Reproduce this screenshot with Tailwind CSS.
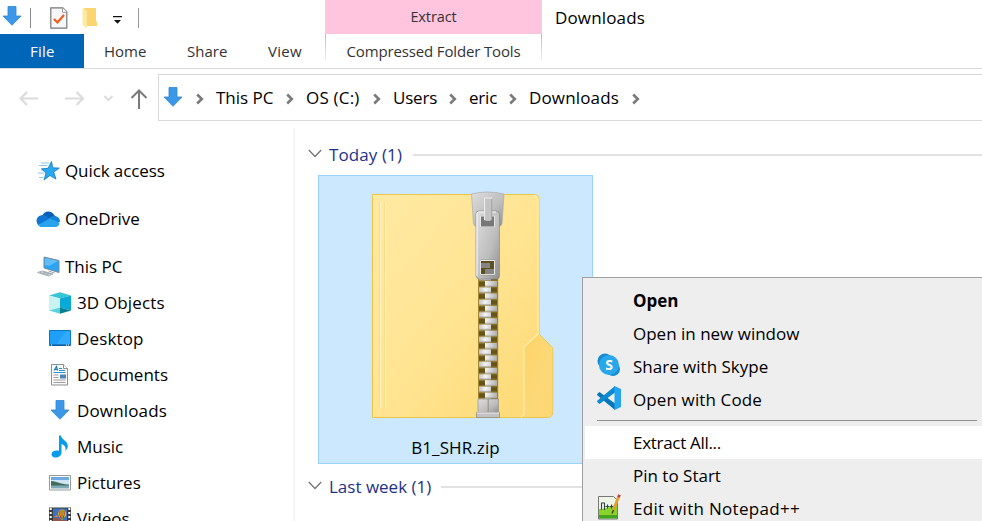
<!DOCTYPE html>
<html lang="en">
<head>
<meta charset="utf-8">
<title>Downloads</title>
<script src="https://cdn.jsdelivr.net/npm/@tailwindcss/browser@4"></script>
</head>
<body class="relative w-[982px] h-[521px] overflow-hidden bg-white text-black text-[17px] leading-6 font-['Open_Sans','Noto_Sans',sans-serif] whitespace-nowrap">
<svg class="hidden">
  <defs>
    <symbol id="arrow" viewBox="0 0 20 20"><path d="M6 .5h8v9.500h5L10 19.300 1 10h5z" fill="#3b98e8" stroke="#2f86d2" stroke-width=".8"/></symbol>
    <symbol id="crumb" viewBox="0 0 8 12"><path d="M1.200 1.500 5.800 6 1.200 10.500" fill="none" stroke="#7a7a7a" stroke-width="2.600"/></symbol>
    <symbol id="chev" viewBox="0 0 14 9"><path d="M.8 1 7 7.500 13.200 1" fill="none" stroke="#757575" stroke-width="1.300"/></symbol>
  </defs>
</svg>

<header class="flex h-[69px] border-b border-[#dadbdc]">
  <div class="w-[325px]">
    <div class="flex h-[34px] items-center">
      <svg class="ml-[2px] w-5 h-5 mb-0.5"><use href="#arrow"/></svg>
      <div class="ml-2 mt-0.5 w-px h-5 bg-[#8a8a8a]"></div>
      <svg class="ml-[19px] mt-0.5 w-[18px] h-[22px]" viewBox="0 0 18 22"><path d="M.8.8h12l4 4v16.400H.8z" fill="#f5f7f9" stroke="#777" stroke-width="1.200"/><path d="M12.500.8v4.500H17" fill="#fff" stroke="#999"/><path d="m4 12 3.500 3.500L14 8" fill="none" stroke="#f4591a" stroke-width="2.200"/></svg>
      <svg class="ml-[14px] mt-0.5 w-[16px] h-[22px]" viewBox="0 0 16 22"><path d="M2 1h12v13.500h1V19H4z" fill="#fbd670"/><path d="M.5 1 5 4v17.500L.5 18z" fill="#ffe9a2"/></svg>
      <svg class="ml-[15px] mt-1.5 w-[9px] h-[9px]" viewBox="0 0 9 9"><path d="M0 0h9v1.300H0zM1 4h7L4.500 7.800z" fill="#111"/></svg>
      <div class="ml-[16px] mt-0.5 w-px h-5 bg-[#999]"></div>
    </div>
    <nav class="flex h-[34px] text-[15px] text-[#333] leading-[34px]">
      <div class="w-[84px] bg-[#0067b8] text-white pl-[30px] tracking-[0.2px]">File</div>
      <div class="w-[83px] pl-5">Home</div>
      <div class="w-[81px] pl-5">Share</div>
      <div class="pl-5 tracking-[0.3px]">View</div>
    </nav>
  </div>
  <div class="w-[217px] text-center text-[15px] text-[#333]">
    <div class="h-[34px] bg-[#ffc5de] leading-[33px] text-[14.500px] tracking-[-0.1px]">Extract</div>
    <div class="flex h-[34px]">
      <div class="w-px h-[26px] bg-linear-to-b from-[#bbb] to-[#eee]"></div>
      <div class="flex-1 leading-[34px] tracking-[-0.15px]">Compressed Folder Tools</div>
      <div class="w-px h-[26px] bg-linear-to-b from-[#bbb] to-[#eee]"></div>
    </div>
  </div>
  <div class="ml-[13px] leading-[35px] tracking-[0.15px]">Downloads</div>
</header>

<div class="flex h-[58px]">
  <svg class="w-[158px] h-[53px]" viewBox="0 69 158 53" fill="none" stroke-width="2.200"><path d="M38 98.500H20M27 92l-6.500 6.500L27 105M65 98.500h18M76.500 92l6.500 6.500-6.500 6.500" stroke="#dcdcdc"/><path d="m104.500 96 4 4 4-4" stroke="#dcdcdc" stroke-width="2"/><path d="M139 109V91.500M131.500 98l7.500-7.500 7.500 7.500" stroke="#7a7a7a" stroke-width="2"/></svg>
  <div class="mt-[5px] h-[47px] flex-1 flex items-center border border-r-0 border-[#d9d9d9] pl-1">
    <svg class="w-5 h-5 mb-0.5"><use href="#arrow"/></svg>
    <svg class="ml-[13px] mr-[12px] mt-0.5 w-2 h-3"><use href="#crumb"/></svg>
    <div class="w-[90px] flex items-center justify-between pr-[12px]"><span>This PC</span><svg class="mt-0.5 w-2 h-3"><use href="#crumb"/></svg></div>
    <div class="w-[87px] flex items-center justify-between pr-[12px]"><span class="tracking-[0.2px]">OS (C:)</span><svg class="mt-0.5 w-2 h-3"><use href="#crumb"/></svg></div>
    <div class="w-[76px] flex items-center justify-between pr-[12px]"><span class="tracking-[-0.2px]">Users</span><svg class="mt-0.5 w-2 h-3"><use href="#crumb"/></svg></div>
    <div class="w-[60px] flex items-center justify-between pr-[12px]"><span class="tracking-[-0.2px]">eric</span><svg class="mt-0.5 w-2 h-3"><use href="#crumb"/></svg></div>
    <div class="w-[123px] flex items-center justify-between pr-[12px]"><span class="tracking-[0.15px]">Downloads</span><svg class="mt-0.5 w-2 h-3"><use href="#crumb"/></svg></div>
  </div>
</div>

<main class="flex h-[394px] overflow-hidden">
  <aside class="w-[293px] shrink-0 flex flex-col pt-[26px] [&>div]:shrink-0">
    <div class="h-9 flex items-center pl-9 mb-3"><svg class="w-6 h-6 mr-[5px]" viewBox="0 0 24 24"><path d="M5 4h8M3 6.500h8M5 11h4M2 14h6M3 18.500h4" stroke="#8bc6ee"/><path d="m15.500 2.500 1.300 6.300 6.500.3-5.600 4 2.300 7-6-3.600-6 4.500 2-7-4.500-4.200 6.500-.5z" fill="#27a8f0" stroke="#1679be" stroke-width=".8"/></svg><span class="tracking-[-0.1px]">Quick access</span></div>
    <div class="h-9 flex items-center pl-9 mb-3"><svg class="w-6 h-6 mr-[5px]" viewBox="0 0 24 24"><path d="M6 9c2-5 9-7 13 0l-6 5z" fill="#0a60b8"/><path d="M5.500 8.200c2-.4 4 .2 5.500 1.300l6 5L2 18c-3.500-5 0-9.500 3.500-9.800z" fill="#0e76d2"/><path d="M16 9.500c4-1.500 8 1 8 5l-4 2-8-5z" fill="#1484d8"/><path d="m2 18 12-6.500 9.500 4.300C23.500 18.500 22 20 19 20H6c-1.800 0-3-.6-4-2z" fill="#29a4ec"/></svg>OneDrive</div>
    <div class="h-9 flex items-center pl-9"><svg class="w-6 h-6 mr-[5px]" viewBox="0 0 24 24"><path d="m8 2 15 3.500v12L8 13z" fill="#2ca4f5" stroke="#7d8c98"/><path d="m9 3 13 3-9 5-4-1z" fill="#63bcf8"/><path d="m1.500 17.500 5-1.500L17 19l-4.500 2z" fill="#e3e7ea" stroke="#a7b0b8"/><path d="m4 17.500 9 2.500M7 17l8 2M12.500 16l6 2" stroke="#9ba7b0"/></svg>This PC</div>
    <div class="h-9 flex items-center pl-12"><svg class="w-6 h-6 mr-[5px]" viewBox="0 0 24 24"><path d="m1 4.500 11-3.300 11 3.300-11 3z" fill="#36c5d4"/><path d="m1 4.500 11 3v9L1 19.500z" fill="#c9f2f2"/><path d="m12 7.500 11-3v15l-11-3z" fill="#08a9d6"/><path d="m1 19.500 11-3v6.300z" fill="#58d5dc"/><path d="m12 16.500 11 3-11 3.300z" fill="#087f91"/></svg><span class="tracking-[0.15px]">3D Objects</span></div>
    <div class="h-9 flex items-center pl-12"><svg class="w-6 h-6 mr-[5px]" viewBox="0 0 24 24"><path d="M1.500 3.500h21v15h-21z" fill="#1ea0fa" stroke="#0b76c4"/><path d="M18 4h4v14H8z" fill="#3fb1fc" opacity=".6"/><path d="M2 18h20" stroke="#0a4b80"/><path d="M3 18h1M18 18h1M20 18h1" stroke="#fff"/></svg><span class="tracking-[0.15px]">Desktop</span></div>
    <div class="h-9 flex items-center pl-12"><svg class="w-6 h-6 mr-[5px]" viewBox="0 0 24 24"><path d="M3.500 1.500h12l4 4v16.500h-16z" fill="#fafafa" stroke="#8f8f8f"/><path d="M15.500 1.500v4h4" fill="#fff" stroke="#8f8f8f"/><path d="m6 7.500 2.500-4 1 4M7 6.500h3" stroke="#147fc0" stroke-width="1.200" fill="none"/><path d="M11 5.500h3M11 7.500h6M5.500 9.500h12" stroke="#2d91ce"/><path d="M5.500 12h5M5.500 14.500h5M5.500 17h12M5.500 19.500h12" stroke="#a0a0a0"/><path d="M12 11.500h6v4h-6z" fill="#4d86b5"/></svg>Documents</div>
    <div class="h-9 flex items-center pl-12"><svg class="w-5 h-5 ml-[2px] mr-[7px] mb-0.5"><use href="#arrow"/></svg><span class="tracking-[0.15px]">Downloads</span></div>
    <div class="h-9 flex items-center pl-12"><svg class="w-6 h-6 mr-[5px]" viewBox="0 0 24 24"><path d="M11 .5h2c.3 4 7 5.500 6.800 10.500 0 2-1 3.500-2.500 5 1-4-1-6-3.800-7v8.500c0 3-3 5-6 5-2.700 0-4-1.500-4-3.300 0-2.800 3.500-4.500 7.500-3.500z" fill="#0a9bea"/></svg>Music</div>
    <div class="h-9 flex items-center pl-12"><svg class="w-6 h-6 mr-[5px]" viewBox="0 0 24 24"><path d="M1.500 4.500h21v14.500h-21z" fill="#fff" stroke="#999"/><path d="M3 6h18v4H3z" fill="#6fa9e2"/><path d="M3 9h18v4H3z" fill="#cde5f5"/><path d="M3 10c5 0 8 3 18 3.500V15H3z" fill="#3f6c5c"/><path d="M3 14.500h18v3H3z" fill="#7fa8b8"/></svg>Pictures</div>
    <div class="h-9 flex items-center pl-12"><svg class="w-6 h-6 mr-[5px]" viewBox="0 0 24 24"><path d="M1 .5h22v22H1z" fill="#3a3a3a"/><path d="M2.700 1v21M21.300 1v21" stroke="#fff" stroke-width="2" stroke-dasharray="2 2"/><path d="M5 1.500h14v19H5z" fill="#3974c4"/><path d="M5 11c5-1 7 3 14 2v7H5z" fill="#95574b"/><path d="M14 13 10.500 9q-1.500-6 3.500-6.500 5 .5 4 6z" fill="#f4b126"/><path d="M12 3.500q-1 4 1 8M16 3.500q1 4-1 8" fill="none" stroke="#b52a27"/><path d="M14 3v9" stroke="#397c38"/><path d="M6 10h4l-1-2z" fill="#f08430"/></svg>Videos</div>
  </aside>
  <div class="mt-px w-0.5 bg-[#f5f5f5]"></div>
  <section class="flex-1">
    <div class="mt-[16px] ml-[13px] h-6 flex items-center text-[#1e3287]"><svg class="w-[14px] h-[9px] mr-[7px] mb-1"><use href="#chev"/></svg><span class="tracking-[0.1px]">Today (1)</span><div class="ml-[11px] flex-1 h-0.5 bg-[#e2e2e2]"></div></div>
    <div class="mt-2 ml-[23px] w-[275px] h-[289px] border border-[#99d1ff] bg-[#cce8ff] flex flex-col">
      <svg class="mt-[10px] w-[273px] h-[236px]" viewBox="319 186 273 236">
        <defs>
          <linearGradient id="fold" x1="0" y1="0" x2="1" y2="1"><stop offset="0" stop-color="#ffe9a3"/><stop offset=".5" stop-color="#ffe492"/><stop offset="1" stop-color="#fed871"/></linearGradient>
          <linearGradient id="metal" x1="0" y1="0" x2="1" y2="1"><stop offset="0" stop-color="#dedede"/><stop offset=".6" stop-color="#bcbcbc"/><stop offset="1" stop-color="#8e8e8e"/></linearGradient>
          <linearGradient id="tooth" x1="0" y1="0" x2="1" y2="0"><stop offset="0" stop-color="#c4c4c4"/><stop offset=".35" stop-color="#f4f4f4"/><stop offset="1" stop-color="#b0b0b0"/></linearGradient>
          <linearGradient id="flap" x1="0" y1="0" x2="1" y2="1"><stop offset="0" stop-color="#fbd364"/><stop offset=".6" stop-color="#fdd878"/><stop offset="1" stop-color="#ffd773"/></linearGradient>
          <pattern id="teeth" x="478" y="281" width="20" height="12.400" patternUnits="userSpaceOnUse"><path d="M0 0h20v12.400H0z" fill="#8a7327"/><path d="M1 1h6v4H1zM13 7h6v4h-6z" fill="#65531a"/><path d="M7 0h12v5.400H7zM1 6.200h12v5.400H1z" fill="url(#tooth)"/><path d="M7 5h12M1 11.200h12" stroke="#a2a2a2" stroke-width=".8"/></pattern>
        </defs>
        <path d="M372.500 194.500H534q5 0 5 5V334l13 13q.7 1 .7 2v63q0 5.500-5.500 5.500H372.500z" fill="url(#fold)" stroke="#e9c64b"/>
        <path d="M538.500 335l13.800 12.500V412q0 5-5.500 5H521q3-1 3-4v-66q0-1 1-2z" fill="url(#flap)"/>
        <path d="M521 417q3-1 3-4v-66l14-13V200q0-4-4-4.500" fill="none" stroke="#fff0ae" stroke-width="1.200"/>
        <path d="M380.500 202v206M385.500 202v206" stroke="#fff3bf" stroke-width="1.200"/><path d="M379.500 202v206M384.500 202v206" stroke="#f5d97e" stroke-width=".7"/>
        <path d="M478 276h20v124h-20z" fill="url(#teeth)"/><path d="M478.500 276v124M497.700 276v124" stroke="#a18732"/>
        <path d="M471.500 194q16-4 32.500 0l-2 30q-1 2.500-4 2.500h-21q-3 0-3.500-3z" fill="url(#metal)" stroke="#aaa" stroke-width=".7"/>
        <path d="M480 215h14v13h-14z" fill="#777"/>
        <path fill-rule="evenodd" d="M479 211h17q3 0 3.500 3v62q0 3-3 3h-17q-3 0-3.500-3v-62q0-3 3-3zm1.500 5v11h14v-11zm0 44v15h14v-15z" fill="url(#metal)" stroke="#888" stroke-width=".7"/>
        <path d="M477 276v-62q0-2 2.500-2H496" fill="none" stroke="#f5f5f5" stroke-width="1.200"/>
        <path d="M481 261h13v14h-13z" fill="#5c501e"/><path d="M481 263h9v5h-9zM485 269h9v5h-9z" fill="#858585"/>
        <path d="M480.500 216v11h14v-11zM480.500 260.500v14h14v-14z" fill="none" stroke="#eee" stroke-width=".9"/>
        <path d="M484 198h8v22q-4 2-8 0z" fill="#c4c4c4"/><path d="M484.500 198v22M484 198h8" stroke="#eee"/><path d="M491.700 199v21" stroke="#999" stroke-width=".8"/>
        <path d="M478 399h10v14h-10zM488.500 399h10v14h-10z" fill="url(#metal)" stroke="#8b8b8b" stroke-width=".6"/><path d="M476.500 412.500h23v5h-23z" fill="#c2c2c2" stroke="#858585" stroke-width=".7"/><path d="M477 413h22" stroke="#eee"/>
      </svg>
      <div class="mt-[14px] text-center tracking-[0.1px]">B1_SHR.zip</div>
    </div>
    <div class="mt-[11px] ml-[13px] h-6 flex items-center text-[#1e3287]"><svg class="w-[14px] h-[9px] mr-[7px] mb-1"><use href="#chev"/></svg><span>Last week (1)</span><div class="ml-[10px] flex-1 h-0.5 bg-[#e2e2e2]"></div></div>
  </section>
</main>

<div class="absolute left-[582px] top-[277px] w-[420px] h-[260px] bg-[#eee] border border-[#a0a0a0] pt-[6px] pl-[2px] flex flex-col [&>div]:shrink-0">
  <div class="h-[33px] flex items-center pl-12 font-bold">Open</div>
  <div class="h-[33px] flex items-center pl-12">Open in new window</div>
  <div class="h-[33px] flex items-center pl-3"><svg class="w-6 h-6 mr-3 mb-1" viewBox="0 0 24 24"><circle cx="8" cy="8" r="7.500" fill="#168bd3"/><circle cx="16" cy="16" r="7" fill="#168bd3"/><circle cx="12" cy="12" r="10" fill="#28a8ea"/><text x="12" y="17" text-anchor="middle" font-size="14" font-weight="700" fill="#fff" font-family="Open Sans">S</text></svg>Share with Skype</div>
  <div class="h-[33px] flex items-center pl-3"><svg class="w-6 h-6 mr-3 mb-1" viewBox="0 0 24 24"><path d="M2.500 6 18 17.500V24L.5 9.500q-.8-1 .2-1.900z" fill="#0877b9"/><path d="M2.500 18 18 6.500V0L.5 14.500q-.8 1 .2 1.900z" fill="#0c89cf"/><path d="M17.500 0 24 3v18l-6.500 3z" fill="#23a5ef"/></svg><span class="tracking-[0.12px]">Open with Code</span></div>
  <div class="h-[10px] pl-3 pt-1"><div class="w-[380px] h-px bg-[#919191]"></div></div>
  <div class="h-[33px] flex items-center pl-12 bg-white tracking-[-0.3px]">Extract All...</div>
  <div class="h-[33px] flex items-center pl-12">Pin to Start</div>
  <div class="h-[33px] flex items-center pl-3"><svg class="w-6 h-[26px] mr-3 mb-1" viewBox="0 0 24 26"><path d="M1.500 2.500h15l4 4v18.500h-19z" fill="#eef5e6" stroke="#777"/><path d="M2 15q8 0 18-5v14H2z" fill="#88d42a"/><path d="M2 21h18v3.500H2z" fill="#42a51d"/><path d="M4.500 16V9h3v7M8.500 12.500h4M10.500 10.500v4M13 12.500h3M14.500 10.500v4" stroke="#344" stroke-width="1.100" fill="none"/><path d="m21.500 3-5 13" stroke="#e2a02c" stroke-width="2.800"/><path d="m22.500.8-1 2.500" stroke="#b74545" stroke-width="2.800"/><path d="m16.500 16-1.500 3.500" stroke="#553d22" stroke-width="1.500"/></svg><span class="tracking-[0.3px]">Edit with Notepad++</span></div>
</div>
</body>
</html>
